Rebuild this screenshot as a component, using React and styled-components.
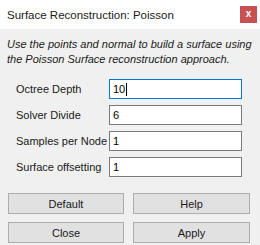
import React from "react";
import styled, { createGlobalStyle } from "styled-components";

const Global = createGlobalStyle`
  html, body { margin: 0; padding: 0; background: #f0f0f0; }
  body { font-family: "Liberation Sans", Arial, sans-serif; }
`;

const Window = styled.div`
  width: 260px;
  height: 245px;
  background: #f0f0f0;
  box-sizing: border-box;
  display: flex;
  flex-direction: column;
  overflow: hidden;
`;

const TitleBar = styled.div`
  height: 29px;
  background: #ffffff;
  display: flex;
  align-items: center;
  justify-content: space-between;
  padding-left: 7px;
  padding-right: 3px;
  flex-shrink: 0;
`;

const Title = styled.span`
  font-size: 11.5px;
  color: #1a1a1a;
`;

const CloseButton = styled.div`
  width: 17px;
  height: 17px;
  background: #c75050;
  color: #fff;
  font-size: 10px;
  font-weight: bold;
  display: flex;
  align-items: center;
  justify-content: center;
  line-height: 1;
  padding-bottom: 1px;
  box-sizing: border-box;
`;

const Description = styled.p`
  margin: 8px 0 0;
  padding: 0 7px;
  font-size: 11px;
  line-height: 15px;
  font-style: italic;
  color: #1a1a1a;
`;

const Form = styled.div`
  display: flex;
  flex-direction: column;
  gap: 6px;
  margin-top: 12px;
  padding-left: 16px;
`;

const Row = styled.div`
  display: flex;
  align-items: center;
  height: 20px;
`;

const Label = styled.span`
  width: 93px;
  font-size: 11px;
  color: #1a1a1a;
`;

const Field = styled.div`
  width: 133px;
  height: 20px;
  box-sizing: border-box;
  background: #fff;
  border: 1px solid ${(p) => (p.$focused ? "#0078d7" : "#7a7a7a")};
  padding-left: 3px;
  font-size: 11px;
  color: #000;
  display: flex;
  align-items: center;
`;

const Caret = styled.span`
  display: inline-block;
  width: 1px;
  height: 13px;
  background: #000;
  margin-left: 1px;
`;

const Buttons = styled.div`
  display: grid;
  grid-template-columns: 116px 117px;
  column-gap: 9px;
  row-gap: 8px;
  padding-left: 8px;
  margin-top: 16px;
`;

const Button = styled.div`
  height: 21px;
  box-sizing: border-box;
  background: #e1e1e1;
  border: 1px solid #adadad;
  font-size: 11px;
  color: #1a1a1a;
  display: flex;
  align-items: center;
  justify-content: center;
`;

const fields = [
  { label: "Octree Depth", value: "10", focused: true },
  { label: "Solver Divide", value: "6" },
  { label: "Samples per Node", value: "1" },
  { label: "Surface offsetting", value: "1" },
];

export default function App() {
  return (
    <>
      <Global />
      <Window>
        <TitleBar>
          <Title>Surface Reconstruction: Poisson</Title>
          <CloseButton>x</CloseButton>
        </TitleBar>
        <Description>
          Use the points and normal to build a surface using
          <br />
          the Poisson Surface reconstruction approach.
        </Description>
        <Form>
          {fields.map((f) => (
            <Row key={f.label}>
              <Label>{f.label}</Label>
              <Field $focused={f.focused}>
                {f.value}
                {f.focused && <Caret />}
              </Field>
            </Row>
          ))}
        </Form>
        <Buttons>
          <Button>Default</Button>
          <Button>Help</Button>
          <Button>Close</Button>
          <Button>Apply</Button>
        </Buttons>
      </Window>
    </>
  );
}
